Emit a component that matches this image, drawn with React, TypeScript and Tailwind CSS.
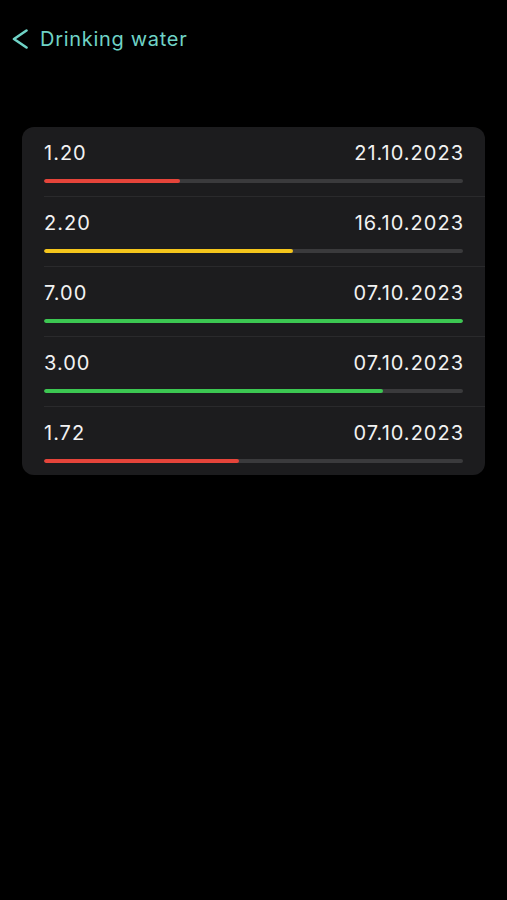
type Entry = {
  value: string;
  date: string;
  ratio: number;
  color: string;
};

const entries: Entry[] = [
  { value: "1.20", date: "21.10.2023", ratio: 0.325, color: "bg-[#e5443a]" },
  { value: "2.20", date: "16.10.2023", ratio: 0.594, color: "bg-[#f4c51c]" },
  { value: "7.00", date: "07.10.2023", ratio: 1, color: "bg-[#3cc752]" },
  { value: "3.00", date: "07.10.2023", ratio: 0.81, color: "bg-[#3cc752]" },
  { value: "1.72", date: "07.10.2023", ratio: 0.465, color: "bg-[#e5443a]" },
];

export default function App() {
  return (
    <div className="min-h-[900px] w-full bg-black font-['Inter','Noto_Sans',sans-serif] text-[#f2f2f2]">
      <div className="flex items-center pl-[11px] pt-[27px] h-[51px] text-[#6fd3c6]">
        <svg width="18" height="20" viewBox="0 0 18 20" fill="none">
          <path d="M15.5 1.5 L3 10 L15.5 18.5" stroke="currentColor" strokeWidth="2.6" strokeLinecap="round" strokeLinejoin="round" />
        </svg>
        <span className="ml-[11px] text-[20px] leading-[24px] tracking-[0.7px]">Drinking water</span>
      </div>
      <div className="mx-[22px] mt-[76px] rounded-[12px] bg-[#1c1c1e] overflow-hidden">
        {entries.map((e, i) => (
          <div key={i} className="pl-[22px]">
            <div
              className={
                "pr-[22px] pt-[14px] " +
                (i < entries.length - 1 ? "pb-[13px] border-b border-[#2a2a2c]" : "pb-[12px]")
              }
            >
              <div className="flex justify-between text-[20px] leading-[24px] tracking-[1px]">
                <span>{e.value}</span>
                <span className="mr-[-1px]">{e.date}</span>
              </div>
              <div className="mt-[14px] h-[4px] rounded-full bg-[#3a3a3c] overflow-hidden">
                <div className={"h-full rounded-full " + e.color} style={{ width: `${e.ratio * 100}%` }} />
              </div>
            </div>
          </div>
        ))}
      </div>
    </div>
  );
}
